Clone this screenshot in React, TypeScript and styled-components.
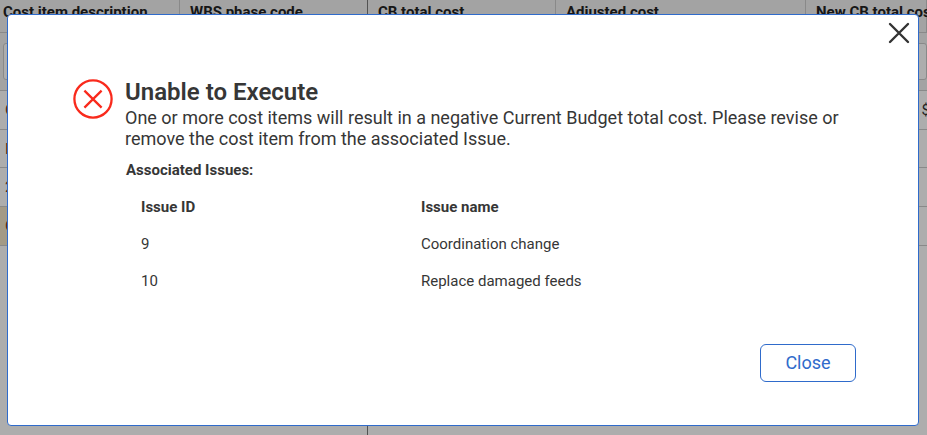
import React from "react";
import styled, { createGlobalStyle } from "styled-components";

const GlobalStyle = createGlobalStyle`
  *, *::before, *::after { box-sizing: border-box; }
  html, body, #root { height: 100%; }
  body {
    margin: 0;
    overflow: hidden;
    font-family: Roboto, "Liberation Sans", sans-serif;
    color: #363636;
    background: #ffffff;
  }
`;

const Page = styled.main`
  display: flex;
  flex-direction: column;
  height: 100vh;
  overflow: hidden;
`;

const CostGrid = styled.table`
  width: 100%;
  flex: none;
  table-layout: fixed;
  border-collapse: separate;
  border-spacing: 0;
  font-size: 15px;
  display: table;
`;

const Column = styled.col<{ $width?: number }>`
  width: ${(p) => (p.$width ? `${p.$width}px` : "auto")};
`;

const HeadCell = styled.th<{ $frozenEdge?: boolean; $first?: boolean }>`
  height: 33px;
  padding: 4px 0 12px ${(p) => (p.$first ? 3 : 10)}px;
  line-height: 16px;
  text-align: left;
  white-space: nowrap;
  color: #222222;
  background: #f0f0f0;
  border-bottom: 1px solid #cbcbcb;
  border-right: 1px solid ${(p) => (p.$frozenEdge ? "#7a7a7a" : "#cbcbcb")};
`;

const FilterCell = styled.td`
  height: 58px;
  padding: 0 0 0 3px;
  background: #f0f0f0;
  border-bottom: 1px solid #cbcbcb;
`;

const FilterInput = styled.input`
  display: block;
  width: 100%;
  height: 37px;
  border: 1px solid #cbcbcb;
  border-radius: 3px;
  background: #ffffff;
`;

const Row = styled.tr<{ $total?: boolean; $height?: number }>`
  height: ${(p) => p.$height ?? 39}px;
  background: ${(p) => (p.$total ? "#f1e4c6" : "#ffffff")};
`;

const Cell = styled.td<{ $label?: boolean }>`
  padding: 0 5px;
  white-space: nowrap;
  color: ${(p) => (p.$label ? "#7a3a1a" : "#333333")};
  border-bottom: 1px solid #cbcbcb;
`;

const PlainCell = styled(Cell)`
  background: #ffffff;
`;

const Amount = styled.span`
  display: block;
  text-align: right;
  margin-right: -8px;
`;

const GridRemainder = styled.div`
  flex: 1;
  width: 368px;
  border-right: 1px solid #7a7a7a;
`;

const Backdrop = styled.div`
  position: fixed;
  inset: 0;
  display: grid;
  padding: 14px 8px 9px 7px;
  background: rgba(0, 0, 0, 0.32);
`;

const Dialog = styled.section`
  display: flex;
  flex-direction: column;
  min-width: 0;
  padding: 5px 6px 43px 65px;
  border: 1px solid #2f6bcb;
  border-radius: 4px;
  background: #ffffff;
`;

const IconButton = styled.button`
  align-self: flex-end;
  display: grid;
  place-items: center;
  width: 26px;
  height: 26px;
  padding: 0;
  border: 0;
  background: transparent;
  color: #333333;
  cursor: pointer;
`;

const Message = styled.div`
  display: flex;
  align-items: flex-start;
  gap: 12px;
  margin-top: 32px;
  padding-right: 55px;
`;

const ErrorMark = styled.svg`
  flex: none;
  margin-top: 1px;
`;

const MessageBody = styled.div`
  flex: 1;
  min-width: 0;
`;

const Title = styled.h1`
  margin: 0 0 1px;
  font-size: 24px;
  line-height: 28px;
  font-weight: 600;
`;

const Description = styled.p`
  margin: 0;
  font-size: 18px;
  line-height: 21px;
`;

const IssueTable = styled.table`
  width: 100%;
  table-layout: fixed;
  border-collapse: collapse;
  font-size: 15px;
  line-height: 18px;
`;

const IssueCaption = styled.caption`
  margin: 12px 0 9px;
  padding-left: 1px;
  text-align: left;
  font-weight: 700;
`;

const IssueHead = styled.th`
  height: 37px;
  padding: 0 0 0 16px;
  text-align: left;
  font-weight: 700;
`;

const IssueCell = styled.td`
  height: 37px;
  padding: 0 0 0 16px;
`;

const Footer = styled.footer`
  display: flex;
  justify-content: flex-end;
  margin-top: auto;
  padding-right: 56px;
`;

const CloseButton = styled.button`
  min-width: 96px;
  height: 38px;
  padding: 0 24px 2px;
  border: 1px solid #2f6bcb;
  border-radius: 6px;
  background: #ffffff;
  color: #2f6bcb;
  font: inherit;
  font-size: 18px;
  cursor: pointer;
`;

const issues = [
  { id: 9, name: "Coordination change" },
  { id: 10, name: "Replace damaged feeds" },
];

export default function App() {
  return (
    <>
      <GlobalStyle />
      <Page>
        <CostGrid>
          <colgroup>
            <Column $width={180} />
            <Column $width={188} />
            <Column $width={188} />
            <Column $width={250} />
            <Column />
          </colgroup>
          <thead>
            <tr>
              <HeadCell $first>Cost item description</HeadCell>
              <HeadCell $frozenEdge>WBS phase code</HeadCell>
              <HeadCell>CB total cost</HeadCell>
              <HeadCell>Adjusted cost</HeadCell>
              <HeadCell>New CB total cost</HeadCell>
            </tr>
          </thead>
          <tbody>
            <tr>
              <FilterCell colSpan={5}>
                <FilterInput aria-label="Filter cost items" />
              </FilterCell>
            </tr>
            <Row>
              <Cell $label colSpan={4}>C</Cell>
              <Cell><Amount>$</Amount></Cell>
            </Row>
            <Row $height={38}><Cell $label colSpan={5}>E</Cell></Row>
            <Row><Cell $label colSpan={5}>2</Cell></Row>
            <Row $total>
              <Cell $label colSpan={4}>C</Cell>
              <PlainCell />
            </Row>
          </tbody>
        </CostGrid>
        <GridRemainder />
      </Page>
      <Backdrop>
        <Dialog role="dialog" aria-modal="true" aria-labelledby="dialog-title">
          <IconButton type="button" aria-label="Close dialog">
            <svg width="22" height="22" viewBox="0 0 22 22" fill="none" stroke="currentColor" strokeWidth="2.4" strokeLinecap="round">
              <path d="M2 2 20 20M20 2 2 20" />
            </svg>
          </IconButton>
          <Message>
            <ErrorMark width="40" height="40" viewBox="0 0 40 40" fill="none" stroke="#f92a1c" strokeWidth="2.3" aria-hidden="true">
              <circle cx="20" cy="20" r="18.6" />
              <path d="m11.4 11.6 17.2 17M28.6 11.6l-17.2 17" />
            </ErrorMark>
            <MessageBody>
              <Title id="dialog-title">Unable to Execute</Title>
              <Description>
                One or more cost items will result in a negative Current Budget total cost. Please revise or remove the cost item from the associated Issue.
              </Description>
              <IssueTable>
                <IssueCaption>Associated Issues:</IssueCaption>
                <colgroup>
                  <Column $width={280} />
                  <Column />
                </colgroup>
                <thead>
                  <tr>
                    <IssueHead scope="col">Issue ID</IssueHead>
                    <IssueHead scope="col">Issue name</IssueHead>
                  </tr>
                </thead>
                <tbody>
                  {issues.map((issue) => (
                    <tr key={issue.id}>
                      <IssueCell>{issue.id}</IssueCell>
                      <IssueCell>{issue.name}</IssueCell>
                    </tr>
                  ))}
                </tbody>
              </IssueTable>
            </MessageBody>
          </Message>
          <Footer>
            <CloseButton type="button">Close</CloseButton>
          </Footer>
        </Dialog>
      </Backdrop>
    </>
  );
}
